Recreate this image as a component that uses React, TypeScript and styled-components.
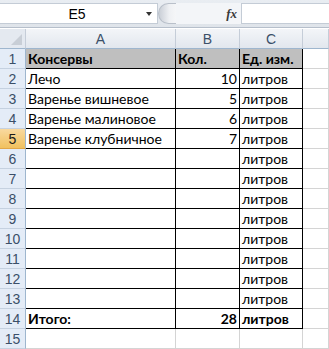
import styled, { createGlobalStyle } from 'styled-components'

const GlobalStyle = createGlobalStyle`
  html, body {
    margin: 0;
    padding: 0;
    background: #ffffff;
  }
  body {
    font-family: Lato, "Liberation Sans", sans-serif;
    font-size: 14px;
    color: #000;
  }
`

const Window = styled.div`
  width: 329px;
  height: 349px;
  overflow: hidden;
  background: #ffffff;
`

const FormulaBar = styled.div`
  height: 28px;
  box-sizing: border-box;
  display: flex;
  align-items: center;
  padding: 3px 0 3px 0;
  background: linear-gradient(#e9edf2, #dfe4ea);
  border-bottom: 1px solid #b6bfcb;
`

const NameBox = styled.div`
  width: 158px;
  height: 21px;
  box-sizing: border-box;
  display: flex;
  align-items: center;
  background: #fff;
  border: 1px solid #c4ccd6;
  border-left: none;
`

const NameText = styled.span`
  flex: 1;
  text-align: center;
  font-family: "Liberation Sans", sans-serif;
  font-size: 14px;
  padding-left: 8px;
`

const DropArrow = styled.span`
  width: 0;
  height: 0;
  margin-right: 5px;
  border-left: 3px solid transparent;
  border-right: 3px solid transparent;
  border-top: 4px solid #333;
`

const Splitter = styled.div`
  width: 18px;
  height: 21px;
  box-sizing: border-box;
  border-radius: 11px 0 0 11px;
  background: linear-gradient(90deg, #c9ced6, #eef0f3 60%, #f5f6f8);
  border: 1px solid #b9c0ca;
  border-right: none;
`

const FxArea = styled.div`
  width: 66px;
  height: 21px;
  display: flex;
  align-items: center;
  justify-content: flex-end;
  padding-right: 4px;
  box-sizing: border-box;
  background: #f3f5f8;
  border-right: 1px solid #c4ccd6;
`

const Fx = styled.span`
  font-family: "Liberation Serif", serif;
  font-style: italic;
  font-weight: bold;
  font-size: 13px;
  color: #3a3a3a;
`

const FormulaInput = styled.div`
  flex: 1;
  height: 21px;
  background: #fff;
  border-top: 1px solid #c4ccd6;
  border-bottom: 1px solid #c4ccd6;
  box-sizing: border-box;
`

const Sheet = styled.div`
  display: grid;
  grid-template-columns: 26px 150px 64px 63px 1fr;
  grid-auto-rows: 20px;
  margin-top: 1px;
`

const Corner = styled.div`
  position: relative;
  background: #e4e9f0;
  border-right: 1px solid #c5cdd8;
  border-bottom: 1px solid #9eb6ce;
  box-sizing: border-box;
  &::after {
    content: '';
    position: absolute;
    right: 3px;
    bottom: 3px;
    width: 0;
    height: 0;
    border-left: 11px solid transparent;
    border-bottom: 11px solid #c8ced6;
  }
`

const ColHead = styled.div`
  background: linear-gradient(#f3f5f8, #e2e7ee);
  border-right: 1px solid #c5cdd8;
  border-bottom: 1px solid #9eb6ce;
  box-sizing: border-box;
  display: flex;
  align-items: center;
  justify-content: center;
  font-family: "Liberation Sans", sans-serif;
  font-size: 14px;
  color: #3b4f68;
`

const RowHead = styled.div<{ $active?: boolean }>`
  background: ${p => (p.$active ? 'linear-gradient(#f9d99f, #f1c15f)' : '#e4ecf7')};
  border-right: 1px solid #9eb6ce;
  border-bottom: 1px solid ${p => (p.$active ? '#e2a748' : '#c5d1e0')};
  box-sizing: border-box;
  display: flex;
  align-items: center;
  justify-content: center;
  font-family: "Liberation Sans", sans-serif;
  font-size: 14px;
  color: ${p => (p.$active ? '#1a1a1a' : '#3b4f68')};
`

const Cell = styled.div<{ $boxed?: boolean; $bold?: boolean; $right?: boolean; $fill?: boolean }>`
  box-sizing: border-box;
  border-right: 1px solid ${p => (p.$boxed ? '#000' : '#d4d4d4')};
  border-bottom: 1px solid ${p => (p.$boxed ? '#000' : '#d4d4d4')};
  background: ${p => (p.$fill ? '#bfbfbf' : '#fff')};
  font-weight: ${p => (p.$bold ? 'bold' : 'normal')};
  text-align: ${p => (p.$right ? 'right' : 'left')};
  padding: 0 2px;
  line-height: 20px;
  white-space: nowrap;
  overflow: visible;
`

type Row = { a: string; b: string; c: string; bold?: boolean; fill?: boolean }

const rows: Row[] = [
  { a: 'Консервы', b: 'Кол.', c: 'Ед. изм.', bold: true, fill: true },
  { a: 'Лечо', b: '10', c: 'литров' },
  { a: 'Варенье вишневое', b: '5', c: 'литров' },
  { a: 'Варенье малиновое', b: '6', c: 'литров' },
  { a: 'Варенье клубничное', b: '7', c: 'литров' },
  ...Array.from({ length: 8 }, () => ({ a: '', b: '', c: 'литров' })),
  { a: 'Итого:', b: '28', c: 'литров', bold: true },
]

export default function App() {
  return (
    <Window>
      <GlobalStyle />
      <FormulaBar>
        <NameBox>
          <NameText>E5</NameText>
          <DropArrow />
        </NameBox>
        <Splitter />
        <FxArea>
          <Fx>fx</Fx>
        </FxArea>
        <FormulaInput />
      </FormulaBar>
      <Sheet>
        <Corner />
        <ColHead>A</ColHead>
        <ColHead>B</ColHead>
        <ColHead>C</ColHead>
        <ColHead />
        {rows.map((r, i) => (
          <Row key={i} n={i + 1} r={r} />
        ))}
        <RowHead>15</RowHead>
        <Cell />
        <Cell />
        <Cell />
        <Cell />
      </Sheet>
    </Window>
  )
}

function Row({ n, r }: { n: number; r: Row }) {
  return (
    <>
      <RowHead $active={n === 5}>{n}</RowHead>
      <Cell $boxed $bold={r.bold} $fill={r.fill}>{r.a}</Cell>
      <Cell $boxed $bold={r.bold} $fill={r.fill} $right={!r.fill}>{r.b}</Cell>
      <Cell $boxed $bold={r.bold} $fill={r.fill}>{r.c}</Cell>
      <Cell />
    </>
  )
}
